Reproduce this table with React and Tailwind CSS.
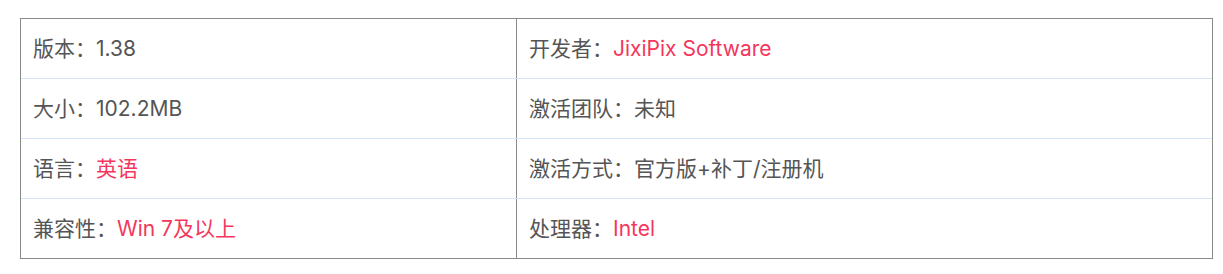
import React from 'react';

const rows = [
  [{ label: '版本：', value: '1.38' }, { label: '开发者：', value: 'JixiPix Software', red: true }],
  [{ label: '大小：', value: '102.2MB' }, { label: '激活团队：', value: '未知' }],
  [{ label: '语言：', value: '英语', red: true }, { label: '激活方式：', value: '官方版+补丁/注册机' }],
  [{ label: '兼容性：', value: 'Win 7及以上', red: true }, { label: '处理器：', value: 'Intel', red: true }],
];

const Cell = ({ item, first }) => (
  <div
    className={`h-[59px] flex items-center pl-[12px] text-[21px] text-[#555555] ${
      first ? 'w-[496px] border-r border-[#8a8a8a]' : 'flex-1'
    }`}
  >
    <span>{item.label}</span>
    <span className={item.red ? 'text-[#f5365c]' : ''}>{item.value}</span>
  </div>
);

export default function App() {
  return (
    <div
      className="bg-white w-[1223px] h-[274px] pt-[18px] pl-[20px]"
      style={{ fontFamily: 'Inter, "Noto Sans CJK SC", sans-serif' }}
    >
      <div className="w-[1193px] border border-[#8a8a8a] flex flex-col">
        {rows.map((row, i) => (
          <div key={i} className={`flex ${i > 0 ? 'border-t border-[#d5e4fb]' : ''}`}>
            <Cell item={row[0]} first />
            <Cell item={row[1]} />
          </div>
        ))}
      </div>
    </div>
  );
}
